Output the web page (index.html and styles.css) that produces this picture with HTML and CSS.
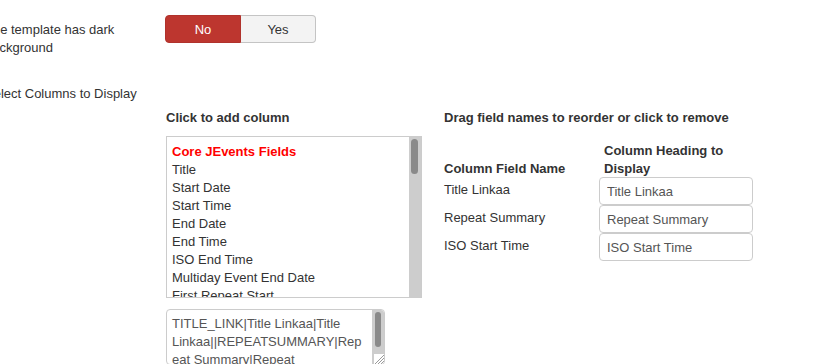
FILE: index.html
```html
<!DOCTYPE html>
<html>
<head>
<meta charset="utf-8">
<link rel="stylesheet" href="styles.css">
</head>
<body>
<div class="form">
  <div class="group group-first">
    <div class="label">The template has dark background</div>
    <div class="controls">
      <div class="toggle">
        <span class="btn btn-no">No</span>
        <span class="btn btn-yes">Yes</span>
      </div>
    </div>
  </div>
  <div class="group">
    <div class="label">Select Columns to Display</div>
    <div class="controls columns">
      <div class="col-left">
        <div class="heading">Click to add column</div>
        <div class="listbox">
          <div class="list-items">
            <div class="opt opt-group">Core JEvents Fields</div>
            <div class="opt">Title</div>
            <div class="opt">Start Date</div>
            <div class="opt">Start Time</div>
            <div class="opt">End Date</div>
            <div class="opt">End Time</div>
            <div class="opt">ISO End Time</div>
            <div class="opt">Multiday Event End Date</div>
            <div class="opt">First Repeat Start</div>
            <div class="opt">First Repeat End</div>
          </div>
          <div class="scrollbar list-scroll"><div class="thumb"></div></div>
        </div>
        <div class="textarea">
          <div class="ta-text">TITLE_LINK|Title Linkaa|Title Linkaa||REPEATSUMMARY|Repeat Summary|Repeat Summary||ISO_START_TIME|ISO Start Time|ISO Start Time</div>
          <div class="scrollbar ta-scroll">
            <div class="thumb"></div>
            <svg class="grip" width="10" height="10" viewBox="0 0 10 10"><path d="M10 1 L1 10 M10 4 L4 10 M10 7 L7 10" stroke="#9a9a9a" stroke-width="1"/></svg>
          </div>
        </div>
      </div>
      <div class="col-right">
        <div class="heading">Drag field names to reorder or click to remove</div>
        <table class="fields">
          <thead>
            <tr><th class="c1"><div class="th-in">Column Field Name</div></th><th class="c2"><div class="th-in">Column Heading to Display</div></th></tr>
          </thead>
          <tbody>
            <tr><td class="c1">Title Linkaa</td><td class="c2"><input class="inp" type="text" value="Title Linkaa"></td></tr>
            <tr><td class="c1">Repeat Summary</td><td class="c2"><input class="inp" type="text" value="Repeat Summary"></td></tr>
            <tr><td class="c1">ISO Start Time</td><td class="c2"><input class="inp" type="text" value="ISO Start Time"></td></tr>
          </tbody>
        </table>
      </div>
    </div>
  </div>
</div>
</body>
</html>
```

FILE: styles.css
```css
html, body {
  margin: 0;
  padding: 0;
  overflow: hidden;
  background: #fff;
}
body {
  font-family: "Liberation Sans", Arial, sans-serif;
  font-size: 13px;
  line-height: 18px;
  color: #333;
}
.form {
  padding-top: 15px;
}
.group {
  display: flex;
  align-items: flex-start;
}
.group-first {
  margin-bottom: 22px;
}
.label {
  width: 160px;
  flex-shrink: 0;
  margin-left: -15px;
  margin-right: 20px;
  padding-top: 6px;
}
.group + .group .label {
  padding-top: 6px;
}
.toggle {
  display: inline-flex;
}
.btn {
  box-sizing: border-box;
  height: 28px;
  padding-top: 1px;
  line-height: 26px;
  text-align: center;
  font-size: 13px;
  border: 1px solid #c4c4c4;
}
.btn-no {
  width: 76px;
  background: #bd362f;
  border-color: #b0322c;
  color: #fff;
  border-radius: 4px 0 0 4px;
}
.btn-yes {
  width: 75px;
  background: #f3f3f3;
  color: #333;
  border-left: 0;
  border-radius: 0 4px 4px 0;
}
.columns {
  display: flex;
  padding-top: 29px;
  margin-left: 1px;
  gap: 22px;
}
.heading {
  font-weight: bold;
  padding-top: 1px;
}
.col-left {
  width: 256px;
}
.col-left .heading {
  margin-bottom: 9px;
}
.listbox {
  box-sizing: border-box;
  width: 256px;
  height: 162px;
  border: 1px solid #ccc;
  display: flex;
  overflow: hidden;
}
.list-items {
  flex: 1;
  padding: 6px 0 0 5px;
  overflow: hidden;
}
.opt {
  white-space: nowrap;
}
.opt-group {
  color: #f00;
  font-weight: bold;
}
.scrollbar {
  background: #cdcdcd;
  flex-shrink: 0;
  position: relative;
}
.list-scroll {
  width: 12px;
}
.list-scroll .thumb {
  margin: 2px 0 0 2px;
  width: 7px;
  height: 35px;
  border-radius: 4px;
  background: #8a8a8a;
}
.textarea {
  box-sizing: border-box;
  margin-top: 11px;
  width: 219px;
  height: 56px;
  border: 1px solid #ccc;
  border-radius: 4px;
  display: flex;
  overflow: hidden;
}
.ta-text {
  flex: 1;
  padding: 5px 6px 0 5px;
  color: #555;
  overflow-wrap: break-word;
  word-wrap: break-word;
  min-width: 0;
}
.ta-scroll {
  width: 12px;
  border-radius: 0 3px 0 0;
}
.ta-scroll .thumb {
  margin: 2px 0 0 3px;
  width: 6px;
  height: 35px;
  border-radius: 3px;
  background: #8a8a8a;
}
.grip {
  position: absolute;
  right: 0;
  bottom: 0;
  display: block;
  background: #fff;
}
.col-right .heading {
  margin-bottom: 14px;
}
.fields {
  border-collapse: collapse;
  border-spacing: 0;
}
.fields th {
  text-align: left;
  vertical-align: bottom;
  padding: 1px 0 0;
  font-weight: bold;
}
.th-in {
  margin-bottom: -1px;
}
.fields th.c1 {
  width: 155px;
}
.fields th.c2 {
  width: 149px;
  padding-left: 5px;
}
.fields td {
  padding: 0;
  vertical-align: top;
}
.fields td.c1 {
  padding-top: 4px;
}
.inp {
  display: block;
  box-sizing: border-box;
  width: 154px;
  height: 28px;
  margin: 0;
  padding: 0 7px;
  border: 1px solid #ccc;
  border-radius: 4px;
  font-family: "Liberation Sans", Arial, sans-serif;
  font-size: 13px;
  color: #555;
  background: #fff;
}
```
